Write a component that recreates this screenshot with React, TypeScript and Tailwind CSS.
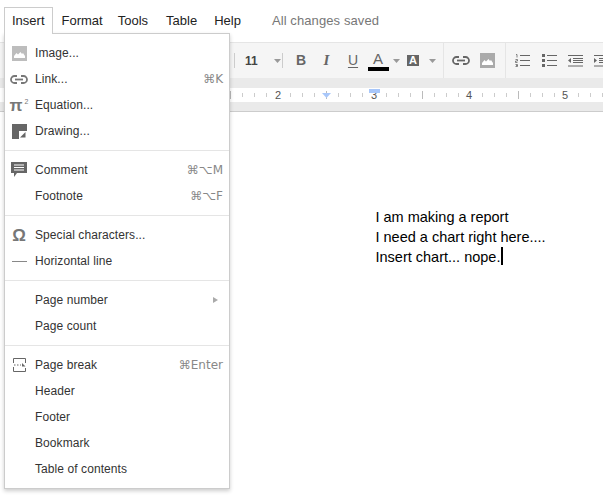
import type { ReactNode } from "react";

const shortcutFont = "font-['DejaVu_Sans','Liberation_Sans',sans-serif]";

function ImageIcon({ fill = "#bdbdbd" }: { fill?: string }) {
  return (
    <svg width="15" height="15" viewBox="0 0 15 15">
      <rect width="15" height="15" fill={fill} />
      <path d="M2 12 L2 10 L4.5 7 L6 8.5 L8.5 6 L10 8 L11 7 L13 10 L13 12 Z" fill="#fff" />
    </svg>
  );
}

function LinkIcon({ color = "#777" }: { color?: string }) {
  return (
    <svg width="18" height="9" viewBox="0 0 18 9" fill="none" stroke={color}>
      <path d="M7 1 H4.5 A3.5 3.5 0 0 0 4.5 8 H7" strokeWidth="1.8" />
      <path d="M11 1 H13.5 A3.5 3.5 0 0 1 13.5 8 H11" strokeWidth="1.8" />
      <path d="M5 4.5 H13" strokeWidth="1.8" />
    </svg>
  );
}

function DrawingIcon() {
  return (
    <svg width="15" height="15" viewBox="0 0 15 15">
      <rect width="15" height="15" fill="#666" />
      <rect x="7" y="7" width="8" height="8" fill="#fff" />
      <path d="M8 13.5 L13.5 8 V13.5 Z" fill="#666" />
    </svg>
  );
}

function CommentIcon() {
  return (
    <svg width="16" height="16" viewBox="0 0 16 16">
      <path d="M0 0 H16 V11 H6 L3 15 V11 H0 Z" fill="#666" />
      <path d="M3 3 H13 M3 5.5 H13 M3 8 H13" stroke="#fff" strokeWidth="1" />
    </svg>
  );
}

function PageBreakIcon() {
  return (
    <svg width="13" height="14" viewBox="0 0 13 14" fill="none" stroke="#666">
      <path d="M0.5 5 V0.5 H12.5 V5" />
      <path d="M0.5 9 V13.5 H12.5 V10" />
      <path d="M1 7 H8" strokeDasharray="1.5 1.5" />
      <path d="M9 5 L12.5 8.5 H9 Z" fill="#666" stroke="none" />
    </svg>
  );
}

function Caret({ className = "" }: { className?: string }) {
  return (
    <svg width="7" height="4" viewBox="0 0 7 4" className={className}>
      <path d="M0 0 H7 L3.5 4 Z" fill="#999" />
    </svg>
  );
}

function ListLines({ dots }: { dots: boolean }) {
  return (
    <svg width="15" height="13" viewBox="0 0 15 13" stroke="#666">
      {dots ? (
        <path d="M0 0 H3 V3 H0 Z M0 5 H3 V8 H0 Z M0 10 H3 V13 H0 Z" fill="#666" stroke="none" />
      ) : (
        <path d="M1 0.5 H2 V3.5 M0.5 5.5 H2.5 V7 H0.5 V8.5 H2.5 M0.5 10.5 H2.5 V12.5 H0.5 M1 11.5 H2.5" fill="none" strokeWidth="0.8" />
      )}
      <path d="M5 1.5 H15 M5 6.5 H15 M5 11.5 H15" />
    </svg>
  );
}

function IndentIcon({ flip }: { flip?: boolean }) {
  return (
    <svg width="15" height="12" viewBox="0 0 15 12" stroke="#666">
      <path d="M0 0.5 H15 M5 3.5 H15 M5 5.5 H15 M5 7.5 H15 M0 11 H15" />
      {flip ? (
        <path d="M0 3 L3 5.5 L0 8 Z" fill="#666" stroke="none" />
      ) : (
        <path d="M3 3 L0 5.5 L3 8 Z" fill="#666" stroke="none" />
      )}
    </svg>
  );
}

function Row({ icon, label, right }: { icon?: ReactNode; label: string; right?: ReactNode }) {
  return (
    <div className="flex h-[26px] items-center pr-[6px]">
      <div className="flex w-[30px] flex-none items-center justify-center pr-[2px]">{icon}</div>
      <span className="flex-1 text-[12px] tracking-[0.08px] text-[#333]">{label}</span>
      {right}
    </div>
  );
}

function Shortcut({ children }: { children: ReactNode }) {
  return <span className={`text-[12px] text-[#888] ${shortcutFont}`}>{children}</span>;
}

function Divider() {
  return <div className="my-[6px] h-px bg-[#e5e5e5]" />;
}

function InsertMenu() {
  return (
    <div className="absolute left-[4px] top-[33px] z-10 w-[226px] border border-[#ccc] bg-white py-[6px] shadow-[0_2px_4px_rgba(0,0,0,0.2)]">
      <Row icon={<ImageIcon />} label="Image..." />
      <Row icon={<LinkIcon />} label="Link..." right={<Shortcut>⌘K</Shortcut>} />
      <Row
        icon={
          <span className="flex items-start leading-none text-[#777]">
            <span className="text-[17px] font-bold leading-[15px]">π</span>
            <span className="ml-[2px] text-[7px] leading-[8px]">2</span>
          </span>
        }
        label="Equation..."
      />
      <Row icon={<DrawingIcon />} label="Drawing..." />
      <Divider />
      <Row icon={<CommentIcon />} label="Comment" right={<Shortcut>⌘⌥M</Shortcut>} />
      <Row label="Footnote" right={<Shortcut>⌘⌥F</Shortcut>} />
      <Divider />
      <Row icon={<span className="text-[17px] font-bold leading-none text-[#777]">Ω</span>} label="Special characters..." />
      <Row icon={<div className="h-px w-[15px] bg-[#888]" />} label="Horizontal line" />
      <Divider />
      <Row
        label="Page number"
        right={
          <svg width="5" height="6" viewBox="0 0 5 6" className="mr-[5px]">
            <path d="M0 0 L5 3 L0 6 Z" fill="#aaa" />
          </svg>
        }
      />
      <Row label="Page count" />
      <Divider />
      <Row icon={<PageBreakIcon />} label="Page break" right={<Shortcut>⌘Enter</Shortcut>} />
      <Row label="Header" />
      <Row label="Footer" />
      <Row label="Bookmark" />
      <Row label="Table of contents" />
    </div>
  );
}

function MenuBar() {
  return (
    <div className="flex h-[42px] items-start bg-white pl-[4px] pt-[7px] text-[13px] text-[#222]">
      <div className="relative z-20 flex h-[27px] items-center border border-b-0 border-[#ccc] bg-white px-[7px]">Insert</div>
      <div className="ml-[9px] flex h-[27px] items-center pr-[7px]">Format</div>
      <div className="flex h-[27px] items-center px-[8px] pr-[10px]">Tools</div>
      <div className="flex h-[27px] items-center px-[8px] pr-[9px]">Table</div>
      <div className="flex h-[27px] items-center px-[8px]">Help</div>
      <div className="ml-[23px] flex h-[27px] items-center tracking-[0.1px] text-[#777]">All changes saved</div>
    </div>
  );
}

function Toolbar() {
  const item = "flex h-full flex-none items-center justify-center";
  return (
    <div className="flex h-[36px] overflow-hidden border-t border-[#e5e5e5] bg-[#f5f5f5] pl-[234px] text-[#666]">
      <div className="my-auto h-[15px] w-px flex-none bg-[#ccc]" />
      <div className={`${item} w-[47px] justify-start pl-[10px]`}>
        <span className="text-[12px] font-bold text-[#444]">11</span>
        <Caret className="ml-[16px]" />
      </div>
      <div className="my-auto h-[15px] w-px flex-none bg-[#ccc]" />
      <div className={`${item} ml-[5px] w-[26px] text-[14px] font-bold`}>B</div>
      <div className={`${item} w-[25px] font-['Liberation_Serif',serif] text-[15px] font-bold italic`}>I</div>
      <div className={`${item} w-[28px] text-[14px] underline underline-offset-2`}>U</div>
      <div className={`${item} w-[22px] flex-col`}>
        <span className="text-[15px] leading-[15px]">A</span>
        <div className="mt-[1px] h-[4px] w-[21px] bg-black" />
      </div>
      <div className={`${item} w-[14px]`}><Caret /></div>
      <div className={`${item} w-[20px]`}>
        <span className="flex h-[11px] w-[12px] items-center justify-center bg-[#666] text-[11px] font-bold text-white">A</span>
      </div>
      <div className={`${item} w-[18px]`}><Caret /></div>
      <div className="ml-[2px] h-full w-px flex-none bg-[#e5e5e5]" />
      <div className={`${item} w-[34px]`}><LinkIcon color="#666" /></div>
      <div className={`${item} w-[18px]`}><ImageIcon fill="#aaa" /></div>
      <div className="ml-[9px] h-full w-px flex-none bg-[#e5e5e5]" />
      <div className={`${item} w-[32px]`}><ListLines dots={false} /></div>
      <div className={`${item} w-[22px]`}><ListLines dots /></div>
      <div className={`${item} w-[30px]`}><IndentIcon /></div>
      <div className={`${item} w-[22px]`}><IndentIcon flip /></div>
    </div>
  );
}

function Ruler() {
  const ticks: ReactNode[] = [];
  for (let i = 0; i < 60; i++) {
    const x = 230.5 + i * 12;
    const major = i % 8 === 0;
    if (i % 8 === 4) continue;
    ticks.push(<path key={i} d={`M${x} ${major ? 3 : 5} V${major ? 11 : 9}`} stroke={major ? "#bbb" : "#ccc"} />);
  }
  return (
    <svg width="603" height="14" viewBox="0 0 603 14" className="block">
      <rect width="603" height="14" fill="#fff" />
      {ticks}
      {[[278, "2"], [374, "3"], [469, "4"], [565, "5"]].map(([x, n]) => (
        <text key={n} x={x} y="11" textAnchor="middle" fontSize="11" fill="#555" fontFamily="Liberation Sans, sans-serif">{n}</text>
      ))}
      <rect x="369" y="1" width="11" height="4" fill="#a8c7fa" />
      <path d="M322 5 H331 L326.5 10 Z" fill="#a8c7fa" />
    </svg>
  );
}

export default function App() {
  return (
    <div className="relative h-[499px] w-[603px] overflow-hidden bg-white font-['Liberation_Sans',Arial,sans-serif]">
      <MenuBar />
      <Toolbar />
      <div className="h-[34px] border-b border-[#ccc] bg-[#eaeaea] py-[10px]">
        <Ruler />
      </div>
      <div className="pl-[375.5px] pt-[95px] text-[14.5px] leading-[20px] text-black">
        <div>I am making a report</div>
        <div>I need a chart right here....</div>
        <div className="flex">
          Insert chart... nope.
          <span className="ml-[1px] h-[18px] w-[2px] bg-black" />
        </div>
      </div>
      <InsertMenu />
    </div>
  );
}
